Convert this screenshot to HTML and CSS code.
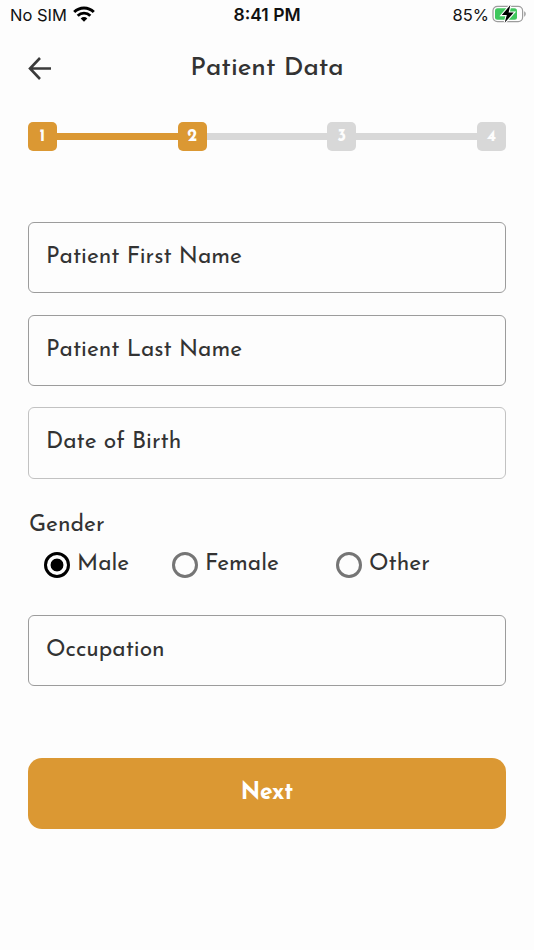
FILE: index.html
```html
<!DOCTYPE html>
<html lang="en">
<head>
    <meta charset="UTF-8">
    <meta name="viewport" content="width=device-width, initial-scale=1.0">
    <title>Patient Data</title>
    <link rel="stylesheet" href="styles.css">
</head>
<body>
    <div class="status-bar">
        <div class="status-left">
            <span class="carrier">No SIM</span>
            <svg class="wifi" width="22" height="16" viewBox="0 0 22 16" fill="none" stroke="#000" stroke-width="2.9">
                <path d="M1.2 6.1C6.6 .6 15.4 .6 20.8 6.1"/>
                <path d="M4.7 9.7C8.2 6.2 13.8 6.2 17.3 9.7"/>
                <path d="M11 15.7L7.7 12.4C9.6 10.6 12.4 10.6 14.3 12.4Z" fill="#000" stroke="none"/>
            </svg>
        </div>
        <span class="time">8:41 PM</span>
        <div class="status-right">
            <span class="percent">85%</span>
            <svg class="battery" width="35" height="20" viewBox="0 0 35 20">
                <rect x="1" y="2.3" width="29.6" height="15.4" rx="4.4" fill="none" stroke="#9c9c9c" stroke-width="1.2"/>
                <path d="M32.2 7.3C34.2 8 34.2 12 32.2 12.7Z" fill="#9c9c9c"/>
                <rect x="3" y="4.3" width="22" height="11.4" rx="2.5" fill="#3fc75d"/>
                <path d="M18.4 1L9.8 11.1H14.8L12.7 18.8L21.7 8.6H16.6Z" fill="#000" stroke="#fdfdfd" stroke-width="2.2" paint-order="stroke"/>
            </svg>
        </div>
    </div>

    <div class="header">
        <svg class="back" width="24" height="24" viewBox="0 0 24 24" fill="none" stroke="#3b3b3b" stroke-width="2.6">
            <path d="M23 12.5H2M12 2L2 12.5L12 23"/>
        </svg>
        <h1>Patient Data</h1>
    </div>

    <!-- Progress -->
    <div class="steps">
        <span class="step active">1</span>
        <span class="line active"></span>
        <span class="step active">2</span>
        <span class="line"></span>
        <span class="step">3</span>
        <span class="line"></span>
        <span class="step">4</span>
    </div>

    <form class="form">
        <div class="field"><span class="first-name">Patient First Name</span></div>
        <div class="field"><span class="last-name">Patient Last Name</span></div>
        <div class="field date"><span class="birth">Date of Birth</span></div>

        <div class="gender-title">Gender</div>
        <div class="gender">
            <label class="male"><input type="radio" name="gender" checked><span>Male</span></label>
            <label class="female"><input type="radio" name="gender"><span>Female</span></label>
            <label class="other"><input type="radio" name="gender"><span>Other</span></label>
        </div>

        <div class="field"><span class="occupation">Occupation</span></div>

        <button type="button" class="next">Next</button>
    </form>
</body>
</html>
```

FILE: styles.css
```css
/* General Styles */
* {
    box-sizing: border-box;
}

body {
    margin: 0;
    height: 950px;
    background-color: #fdfdfd;
    font-family: 'Josefin Sans', Lato, sans-serif;
    font-size: 22.8px;
    color: #333;
    overflow: hidden;
}

svg {
    display: block;
}

/* Status bar */
.status-bar {
    display: grid;
    grid-template-columns: 1fr auto 1fr;
    align-items: center;
    height: 30px;
    padding: 0 7px 0 10px;
    font-family: Inter, sans-serif;
    font-size: 16.5px;
    color: #111;
}

.status-left, .status-right {
    display: flex;
    align-items: center;
}

.status-left {
    gap: 6px;
}

.status-right {
    justify-content: flex-end;
    gap: 3px;
}

.battery, .wifi {
    margin-top: -2px;
}

.time {
    margin: -2px 3px 0 0;
    font-size: 17.5px;
    font-weight: 600;
}

/* Header */
.header {
    display: grid;
    grid-template-columns: 24px 1fr 24px;
    align-items: center;
    height: 76px;
    padding: 0 28px;
}

.header h1 {
    margin: 0;
    padding-top: 1px;
    font-size: 26px;
    font-weight: 500;
    text-align: center;
}

/* Steps */
.steps {
    display: flex;
    align-items: center;
    margin: 16px 28px 0;
}

.step {
    width: 29px;
    height: 29px;
    border-radius: 5px;
    background-color: #d8d8d8;
    color: #fdfdfd;
    font-size: 17px;
    font-weight: bold;
    line-height: 30px;
    text-align: center;
}

.line {
    flex: 1;
    height: 7px;
    background-color: #d8d8d8;
}

.step.active, .line.active {
    background-color: #db9833;
}

/* Form */
.form {
    padding: 71px 28px 0;
}

.field {
    display: flex;
    align-items: center;
    height: 71px;
    margin-bottom: 22px;
    padding: 0 0 1px 17px;
    border: 1.5px solid #9c9c9c;
    border-radius: 6px;
}

.field.date {
    height: 72px;
    margin-top: -1px;
    border: 1px solid #c2c2c2;
}

.gender-title {
    margin-top: 33px;
    padding-left: 1px;
    line-height: 28px;
}

.gender {
    display: grid;
    grid-template-columns: 128px 164px 1fr;
    margin: 11px 0 37px 16px;
    height: 27px;
}

.gender label {
    display: flex;
    align-items: center;
    gap: 7px;
}

input[type="radio"] {
    appearance: none;
    width: 26px;
    height: 26px;
    margin: 0;
    border: 3px solid #757575;
    border-radius: 50%;
}

input[type="radio"]:checked {
    border-color: #000;
    background: radial-gradient(circle, #000 6px, transparent 6.8px);
}

.next {
    display: block;
    width: 100%;
    height: 71px;
    margin-top: 72px;
    padding: 0 0 1px;
    border: none;
    border-radius: 14px;
    background-color: #db9833;
    color: #fff;
    font-family: inherit;
    font-size: 22.8px;
    font-weight: bold;
}
```
